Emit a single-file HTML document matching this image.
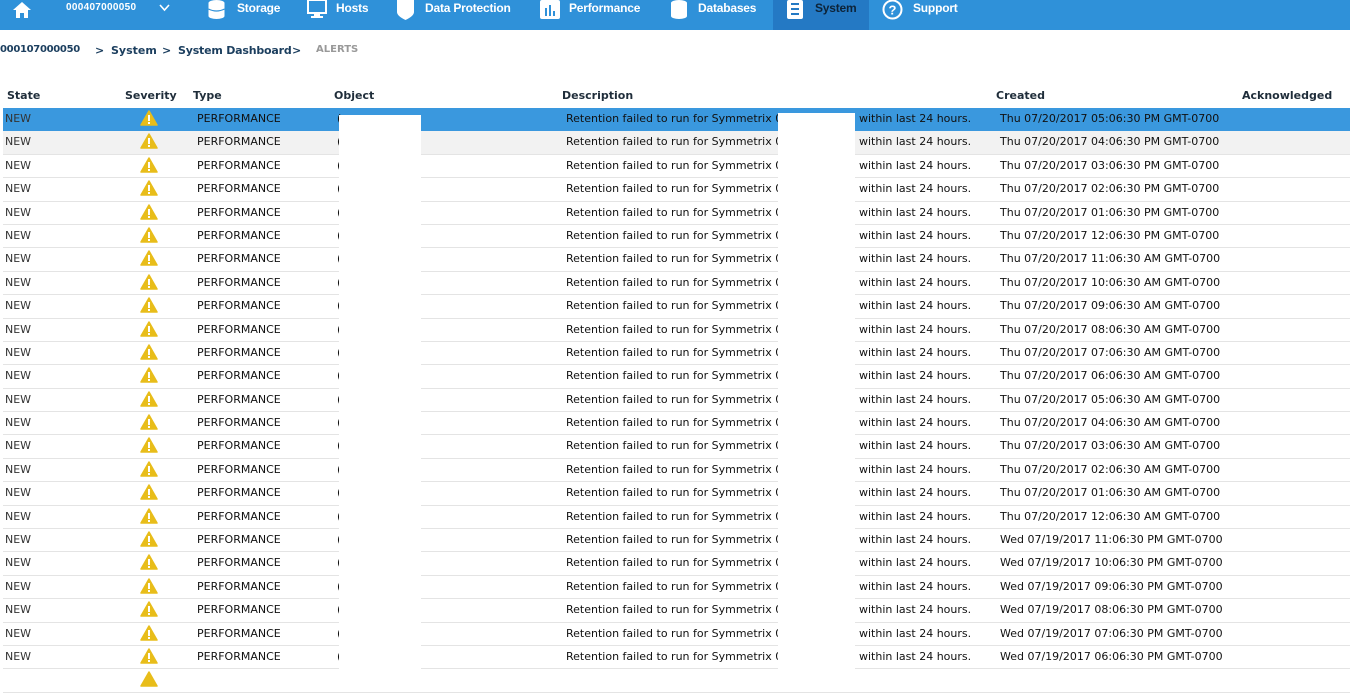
<!DOCTYPE html>
<html><head><meta charset="utf-8"><style>
*{margin:0;padding:0;box-sizing:border-box}
body{width:1350px;height:674px;overflow:hidden;background:#fff;font-family:"DejaVu Sans",Verdana,sans-serif;position:relative;color:#222}
.nav{position:absolute;left:0;top:0;width:1350px;height:30px;background:#2f91d9}
.nav .it{position:absolute;top:0;height:30px;color:#fff;font:bold 12px "Liberation Sans",Arial,sans-serif;line-height:16px;letter-spacing:-0.2px}
.act{position:absolute;left:773px;top:0;width:96px;height:30px;background:#2479c4}
.bc{position:absolute;top:44px;font:bold 11px "DejaVu Sans",sans-serif;color:#1b3e5e;white-space:nowrap}
.hd{position:absolute;top:89px;font:bold 11px "DejaVu Sans",sans-serif;color:#1f2d3a}
.tb{position:absolute;left:3px;top:108px;width:1347px}
.r{position:relative;width:1347px;height:23.4px;border-bottom:1px solid #e4e4e4;font-size:11px;color:#111}
.r span{position:absolute;top:4px;white-space:nowrap}
.r .s{left:2px;color:#333}
.r .w{position:absolute;left:137px;top:2px}
.r .a{left:194px}.r .o{left:334px}.r .d{left:563px}.r .h{left:856px}.r .c{left:997px}
.sel{background:#3a98de;border-bottom:none}
.alt{background:#f2f2f2}
.wb{position:absolute;background:#fff}
</style></head><body>
<div class="nav">
 <svg style="position:absolute;left:12px;top:1px" width="20" height="17" viewBox="0 0 20 17"><path d="M10 1 L1 9 H4 V17 H8 V12 H12 V17 H16 V9 H19 Z" fill="#fff"/></svg>
 <div class="it" style="left:66px;font-size:10px;letter-spacing:0.3px">000407000050</div>
 <svg style="position:absolute;left:159px;top:4px" width="11" height="8"><path d="M1 1 L5.5 6 L10 1" stroke="#fff" stroke-width="1.6" fill="none"/></svg>
 <svg style="position:absolute;left:208px;top:0" width="17" height="19"><ellipse cx="8.5" cy="3" rx="8" ry="3" fill="#fff"/><rect x="0.5" y="3" width="16" height="13" fill="#fff"/><ellipse cx="8.5" cy="16" rx="8" ry="3" fill="#fff"/><path d="M0.5 9 Q8.5 13 16.5 9" stroke="#2f91d9" stroke-width="1.2" fill="none"/></svg>
 <div class="it" style="left:237px">Storage</div>
 <svg style="position:absolute;left:307px;top:0" width="20" height="20"><rect x="1" y="0" width="18" height="13" fill="none" stroke="#fff" stroke-width="2"/><rect x="7" y="14" width="6" height="2" fill="#fff"/><rect x="4" y="16" width="12" height="2" fill="#fff"/></svg>
 <div class="it" style="left:336px">Hosts</div>
 <svg style="position:absolute;left:397px;top:0" width="17" height="20"><path d="M0 0 H17 V12 Q17 16 8.5 20 Q0 16 0 12 Z" fill="#fff"/></svg>
 <div class="it" style="left:425px">Data Protection</div>
 <svg style="position:absolute;left:540px;top:0" width="20" height="19"><rect width="20" height="19" rx="2" fill="#fff"/><rect x="5" y="8" width="2" height="8" fill="#2f91d9"/><rect x="9" y="5" width="2" height="11" fill="#2f91d9"/><rect x="13" y="11" width="2" height="5" fill="#2f91d9"/></svg>
 <div class="it" style="left:569px">Performance</div>
 <svg style="position:absolute;left:671px;top:0" width="16" height="19"><ellipse cx="8" cy="3" rx="8" ry="3" fill="#fff"/><rect x="0" y="3" width="16" height="13" fill="#fff"/><ellipse cx="8" cy="16" rx="8" ry="3" fill="#fff"/></svg>
 <div class="it" style="left:698px">Databases</div>
 <div class="act"></div>
 <svg style="position:absolute;left:787px;top:0" width="16" height="19"><rect width="16" height="19" rx="2" fill="#fff"/><rect x="4" y="3" width="8" height="2" fill="#2479c4"/><rect x="4" y="8" width="8" height="2" fill="#2479c4"/><rect x="4" y="13" width="8" height="2" fill="#2479c4"/></svg>
 <div class="it" style="left:815px;color:#0d2338">System</div>
 <svg style="position:absolute;left:882px;top:0" width="21" height="20"><circle cx="10.5" cy="9.5" r="9" fill="none" stroke="#fff" stroke-width="2"/><text x="10.5" y="14.5" font-size="13" font-weight="bold" font-family="Liberation Sans" text-anchor="middle" fill="#fff">?</text></svg>
 <div class="it" style="left:913px">Support</div>
</div>
<div class="bc" style="left:0;letter-spacing:-0.3px;font-size:10px">000107000050</div>
<div class="bc" style="left:95px">&gt;</div>
<div class="bc" style="left:111px">System</div>
<div class="bc" style="left:162px">&gt;</div>
<div class="bc" style="left:178px;letter-spacing:-0.2px">System Dashboard</div>
<div class="bc" style="left:292px">&gt;</div>
<div class="bc" style="left:316px;color:#999;font-size:10px">ALERTS</div>
<div class="hd" style="left:7px">State</div>
<div class="hd" style="left:125px">Severity</div>
<div class="hd" style="left:193px">Type</div>
<div class="hd" style="left:334px">Object</div>
<div class="hd" style="left:562px">Description</div>
<div class="hd" style="left:996px">Created</div>
<div class="hd" style="left:1242px">Acknowledged</div>
<div class="tb">
<div class="r sel"><span class="s">NEW</span><svg class="w" width="18" height="16" viewBox="0 0 18 16"><path d="M9 1 L17 15 H1 Z" fill="#e8bd1a" stroke="#e8bd1a" stroke-linejoin="round" stroke-width="1.5"/><rect x="8" y="5" width="2" height="6" fill="#fff"/><rect x="8" y="12" width="2" height="2" fill="#fff"/></svg><span class="a">PERFORMANCE</span><span class="o">(</span><span class="d">Retention failed to run for Symmetrix 0</span><span class="h">within last 24 hours.</span><span class="c">Thu 07/20/2017 05:06:30 PM GMT-0700</span></div>
<div class="r alt"><span class="s">NEW</span><svg class="w" width="18" height="16" viewBox="0 0 18 16"><path d="M9 1 L17 15 H1 Z" fill="#e8bd1a" stroke="#e8bd1a" stroke-linejoin="round" stroke-width="1.5"/><rect x="8" y="5" width="2" height="6" fill="#fff"/><rect x="8" y="12" width="2" height="2" fill="#fff"/></svg><span class="a">PERFORMANCE</span><span class="o">(</span><span class="d">Retention failed to run for Symmetrix 0</span><span class="h">within last 24 hours.</span><span class="c">Thu 07/20/2017 04:06:30 PM GMT-0700</span></div>
<div class="r"><span class="s">NEW</span><svg class="w" width="18" height="16" viewBox="0 0 18 16"><path d="M9 1 L17 15 H1 Z" fill="#e8bd1a" stroke="#e8bd1a" stroke-linejoin="round" stroke-width="1.5"/><rect x="8" y="5" width="2" height="6" fill="#fff"/><rect x="8" y="12" width="2" height="2" fill="#fff"/></svg><span class="a">PERFORMANCE</span><span class="o">(</span><span class="d">Retention failed to run for Symmetrix 0</span><span class="h">within last 24 hours.</span><span class="c">Thu 07/20/2017 03:06:30 PM GMT-0700</span></div>
<div class="r"><span class="s">NEW</span><svg class="w" width="18" height="16" viewBox="0 0 18 16"><path d="M9 1 L17 15 H1 Z" fill="#e8bd1a" stroke="#e8bd1a" stroke-linejoin="round" stroke-width="1.5"/><rect x="8" y="5" width="2" height="6" fill="#fff"/><rect x="8" y="12" width="2" height="2" fill="#fff"/></svg><span class="a">PERFORMANCE</span><span class="o">(</span><span class="d">Retention failed to run for Symmetrix 0</span><span class="h">within last 24 hours.</span><span class="c">Thu 07/20/2017 02:06:30 PM GMT-0700</span></div>
<div class="r"><span class="s">NEW</span><svg class="w" width="18" height="16" viewBox="0 0 18 16"><path d="M9 1 L17 15 H1 Z" fill="#e8bd1a" stroke="#e8bd1a" stroke-linejoin="round" stroke-width="1.5"/><rect x="8" y="5" width="2" height="6" fill="#fff"/><rect x="8" y="12" width="2" height="2" fill="#fff"/></svg><span class="a">PERFORMANCE</span><span class="o">(</span><span class="d">Retention failed to run for Symmetrix 0</span><span class="h">within last 24 hours.</span><span class="c">Thu 07/20/2017 01:06:30 PM GMT-0700</span></div>
<div class="r"><span class="s">NEW</span><svg class="w" width="18" height="16" viewBox="0 0 18 16"><path d="M9 1 L17 15 H1 Z" fill="#e8bd1a" stroke="#e8bd1a" stroke-linejoin="round" stroke-width="1.5"/><rect x="8" y="5" width="2" height="6" fill="#fff"/><rect x="8" y="12" width="2" height="2" fill="#fff"/></svg><span class="a">PERFORMANCE</span><span class="o">(</span><span class="d">Retention failed to run for Symmetrix 0</span><span class="h">within last 24 hours.</span><span class="c">Thu 07/20/2017 12:06:30 PM GMT-0700</span></div>
<div class="r"><span class="s">NEW</span><svg class="w" width="18" height="16" viewBox="0 0 18 16"><path d="M9 1 L17 15 H1 Z" fill="#e8bd1a" stroke="#e8bd1a" stroke-linejoin="round" stroke-width="1.5"/><rect x="8" y="5" width="2" height="6" fill="#fff"/><rect x="8" y="12" width="2" height="2" fill="#fff"/></svg><span class="a">PERFORMANCE</span><span class="o">(</span><span class="d">Retention failed to run for Symmetrix 0</span><span class="h">within last 24 hours.</span><span class="c">Thu 07/20/2017 11:06:30 AM GMT-0700</span></div>
<div class="r"><span class="s">NEW</span><svg class="w" width="18" height="16" viewBox="0 0 18 16"><path d="M9 1 L17 15 H1 Z" fill="#e8bd1a" stroke="#e8bd1a" stroke-linejoin="round" stroke-width="1.5"/><rect x="8" y="5" width="2" height="6" fill="#fff"/><rect x="8" y="12" width="2" height="2" fill="#fff"/></svg><span class="a">PERFORMANCE</span><span class="o">(</span><span class="d">Retention failed to run for Symmetrix 0</span><span class="h">within last 24 hours.</span><span class="c">Thu 07/20/2017 10:06:30 AM GMT-0700</span></div>
<div class="r"><span class="s">NEW</span><svg class="w" width="18" height="16" viewBox="0 0 18 16"><path d="M9 1 L17 15 H1 Z" fill="#e8bd1a" stroke="#e8bd1a" stroke-linejoin="round" stroke-width="1.5"/><rect x="8" y="5" width="2" height="6" fill="#fff"/><rect x="8" y="12" width="2" height="2" fill="#fff"/></svg><span class="a">PERFORMANCE</span><span class="o">(</span><span class="d">Retention failed to run for Symmetrix 0</span><span class="h">within last 24 hours.</span><span class="c">Thu 07/20/2017 09:06:30 AM GMT-0700</span></div>
<div class="r"><span class="s">NEW</span><svg class="w" width="18" height="16" viewBox="0 0 18 16"><path d="M9 1 L17 15 H1 Z" fill="#e8bd1a" stroke="#e8bd1a" stroke-linejoin="round" stroke-width="1.5"/><rect x="8" y="5" width="2" height="6" fill="#fff"/><rect x="8" y="12" width="2" height="2" fill="#fff"/></svg><span class="a">PERFORMANCE</span><span class="o">(</span><span class="d">Retention failed to run for Symmetrix 0</span><span class="h">within last 24 hours.</span><span class="c">Thu 07/20/2017 08:06:30 AM GMT-0700</span></div>
<div class="r"><span class="s">NEW</span><svg class="w" width="18" height="16" viewBox="0 0 18 16"><path d="M9 1 L17 15 H1 Z" fill="#e8bd1a" stroke="#e8bd1a" stroke-linejoin="round" stroke-width="1.5"/><rect x="8" y="5" width="2" height="6" fill="#fff"/><rect x="8" y="12" width="2" height="2" fill="#fff"/></svg><span class="a">PERFORMANCE</span><span class="o">(</span><span class="d">Retention failed to run for Symmetrix 0</span><span class="h">within last 24 hours.</span><span class="c">Thu 07/20/2017 07:06:30 AM GMT-0700</span></div>
<div class="r"><span class="s">NEW</span><svg class="w" width="18" height="16" viewBox="0 0 18 16"><path d="M9 1 L17 15 H1 Z" fill="#e8bd1a" stroke="#e8bd1a" stroke-linejoin="round" stroke-width="1.5"/><rect x="8" y="5" width="2" height="6" fill="#fff"/><rect x="8" y="12" width="2" height="2" fill="#fff"/></svg><span class="a">PERFORMANCE</span><span class="o">(</span><span class="d">Retention failed to run for Symmetrix 0</span><span class="h">within last 24 hours.</span><span class="c">Thu 07/20/2017 06:06:30 AM GMT-0700</span></div>
<div class="r"><span class="s">NEW</span><svg class="w" width="18" height="16" viewBox="0 0 18 16"><path d="M9 1 L17 15 H1 Z" fill="#e8bd1a" stroke="#e8bd1a" stroke-linejoin="round" stroke-width="1.5"/><rect x="8" y="5" width="2" height="6" fill="#fff"/><rect x="8" y="12" width="2" height="2" fill="#fff"/></svg><span class="a">PERFORMANCE</span><span class="o">(</span><span class="d">Retention failed to run for Symmetrix 0</span><span class="h">within last 24 hours.</span><span class="c">Thu 07/20/2017 05:06:30 AM GMT-0700</span></div>
<div class="r"><span class="s">NEW</span><svg class="w" width="18" height="16" viewBox="0 0 18 16"><path d="M9 1 L17 15 H1 Z" fill="#e8bd1a" stroke="#e8bd1a" stroke-linejoin="round" stroke-width="1.5"/><rect x="8" y="5" width="2" height="6" fill="#fff"/><rect x="8" y="12" width="2" height="2" fill="#fff"/></svg><span class="a">PERFORMANCE</span><span class="o">(</span><span class="d">Retention failed to run for Symmetrix 0</span><span class="h">within last 24 hours.</span><span class="c">Thu 07/20/2017 04:06:30 AM GMT-0700</span></div>
<div class="r"><span class="s">NEW</span><svg class="w" width="18" height="16" viewBox="0 0 18 16"><path d="M9 1 L17 15 H1 Z" fill="#e8bd1a" stroke="#e8bd1a" stroke-linejoin="round" stroke-width="1.5"/><rect x="8" y="5" width="2" height="6" fill="#fff"/><rect x="8" y="12" width="2" height="2" fill="#fff"/></svg><span class="a">PERFORMANCE</span><span class="o">(</span><span class="d">Retention failed to run for Symmetrix 0</span><span class="h">within last 24 hours.</span><span class="c">Thu 07/20/2017 03:06:30 AM GMT-0700</span></div>
<div class="r"><span class="s">NEW</span><svg class="w" width="18" height="16" viewBox="0 0 18 16"><path d="M9 1 L17 15 H1 Z" fill="#e8bd1a" stroke="#e8bd1a" stroke-linejoin="round" stroke-width="1.5"/><rect x="8" y="5" width="2" height="6" fill="#fff"/><rect x="8" y="12" width="2" height="2" fill="#fff"/></svg><span class="a">PERFORMANCE</span><span class="o">(</span><span class="d">Retention failed to run for Symmetrix 0</span><span class="h">within last 24 hours.</span><span class="c">Thu 07/20/2017 02:06:30 AM GMT-0700</span></div>
<div class="r"><span class="s">NEW</span><svg class="w" width="18" height="16" viewBox="0 0 18 16"><path d="M9 1 L17 15 H1 Z" fill="#e8bd1a" stroke="#e8bd1a" stroke-linejoin="round" stroke-width="1.5"/><rect x="8" y="5" width="2" height="6" fill="#fff"/><rect x="8" y="12" width="2" height="2" fill="#fff"/></svg><span class="a">PERFORMANCE</span><span class="o">(</span><span class="d">Retention failed to run for Symmetrix 0</span><span class="h">within last 24 hours.</span><span class="c">Thu 07/20/2017 01:06:30 AM GMT-0700</span></div>
<div class="r"><span class="s">NEW</span><svg class="w" width="18" height="16" viewBox="0 0 18 16"><path d="M9 1 L17 15 H1 Z" fill="#e8bd1a" stroke="#e8bd1a" stroke-linejoin="round" stroke-width="1.5"/><rect x="8" y="5" width="2" height="6" fill="#fff"/><rect x="8" y="12" width="2" height="2" fill="#fff"/></svg><span class="a">PERFORMANCE</span><span class="o">(</span><span class="d">Retention failed to run for Symmetrix 0</span><span class="h">within last 24 hours.</span><span class="c">Thu 07/20/2017 12:06:30 AM GMT-0700</span></div>
<div class="r"><span class="s">NEW</span><svg class="w" width="18" height="16" viewBox="0 0 18 16"><path d="M9 1 L17 15 H1 Z" fill="#e8bd1a" stroke="#e8bd1a" stroke-linejoin="round" stroke-width="1.5"/><rect x="8" y="5" width="2" height="6" fill="#fff"/><rect x="8" y="12" width="2" height="2" fill="#fff"/></svg><span class="a">PERFORMANCE</span><span class="o">(</span><span class="d">Retention failed to run for Symmetrix 0</span><span class="h">within last 24 hours.</span><span class="c">Wed 07/19/2017 11:06:30 PM GMT-0700</span></div>
<div class="r"><span class="s">NEW</span><svg class="w" width="18" height="16" viewBox="0 0 18 16"><path d="M9 1 L17 15 H1 Z" fill="#e8bd1a" stroke="#e8bd1a" stroke-linejoin="round" stroke-width="1.5"/><rect x="8" y="5" width="2" height="6" fill="#fff"/><rect x="8" y="12" width="2" height="2" fill="#fff"/></svg><span class="a">PERFORMANCE</span><span class="o">(</span><span class="d">Retention failed to run for Symmetrix 0</span><span class="h">within last 24 hours.</span><span class="c">Wed 07/19/2017 10:06:30 PM GMT-0700</span></div>
<div class="r"><span class="s">NEW</span><svg class="w" width="18" height="16" viewBox="0 0 18 16"><path d="M9 1 L17 15 H1 Z" fill="#e8bd1a" stroke="#e8bd1a" stroke-linejoin="round" stroke-width="1.5"/><rect x="8" y="5" width="2" height="6" fill="#fff"/><rect x="8" y="12" width="2" height="2" fill="#fff"/></svg><span class="a">PERFORMANCE</span><span class="o">(</span><span class="d">Retention failed to run for Symmetrix 0</span><span class="h">within last 24 hours.</span><span class="c">Wed 07/19/2017 09:06:30 PM GMT-0700</span></div>
<div class="r"><span class="s">NEW</span><svg class="w" width="18" height="16" viewBox="0 0 18 16"><path d="M9 1 L17 15 H1 Z" fill="#e8bd1a" stroke="#e8bd1a" stroke-linejoin="round" stroke-width="1.5"/><rect x="8" y="5" width="2" height="6" fill="#fff"/><rect x="8" y="12" width="2" height="2" fill="#fff"/></svg><span class="a">PERFORMANCE</span><span class="o">(</span><span class="d">Retention failed to run for Symmetrix 0</span><span class="h">within last 24 hours.</span><span class="c">Wed 07/19/2017 08:06:30 PM GMT-0700</span></div>
<div class="r"><span class="s">NEW</span><svg class="w" width="18" height="16" viewBox="0 0 18 16"><path d="M9 1 L17 15 H1 Z" fill="#e8bd1a" stroke="#e8bd1a" stroke-linejoin="round" stroke-width="1.5"/><rect x="8" y="5" width="2" height="6" fill="#fff"/><rect x="8" y="12" width="2" height="2" fill="#fff"/></svg><span class="a">PERFORMANCE</span><span class="o">(</span><span class="d">Retention failed to run for Symmetrix 0</span><span class="h">within last 24 hours.</span><span class="c">Wed 07/19/2017 07:06:30 PM GMT-0700</span></div>
<div class="r"><span class="s">NEW</span><svg class="w" width="18" height="16" viewBox="0 0 18 16"><path d="M9 1 L17 15 H1 Z" fill="#e8bd1a" stroke="#e8bd1a" stroke-linejoin="round" stroke-width="1.5"/><rect x="8" y="5" width="2" height="6" fill="#fff"/><rect x="8" y="12" width="2" height="2" fill="#fff"/></svg><span class="a">PERFORMANCE</span><span class="o">(</span><span class="d">Retention failed to run for Symmetrix 0</span><span class="h">within last 24 hours.</span><span class="c">Wed 07/19/2017 06:06:30 PM GMT-0700</span></div>
<div class="r"><svg class="w" width="18" height="16" viewBox="0 0 18 16"><path d="M9 1 L17 15 H1 Z" fill="#e8bd1a" stroke="#e8bd1a" stroke-linejoin="round" stroke-width="1.5"/></svg></div>
</div>
<div class="wb" style="left:339px;top:115px;width:82px;height:559px"></div>
<div class="wb" style="left:778px;top:113px;width:77px;height:561px"></div>
</body></html>
